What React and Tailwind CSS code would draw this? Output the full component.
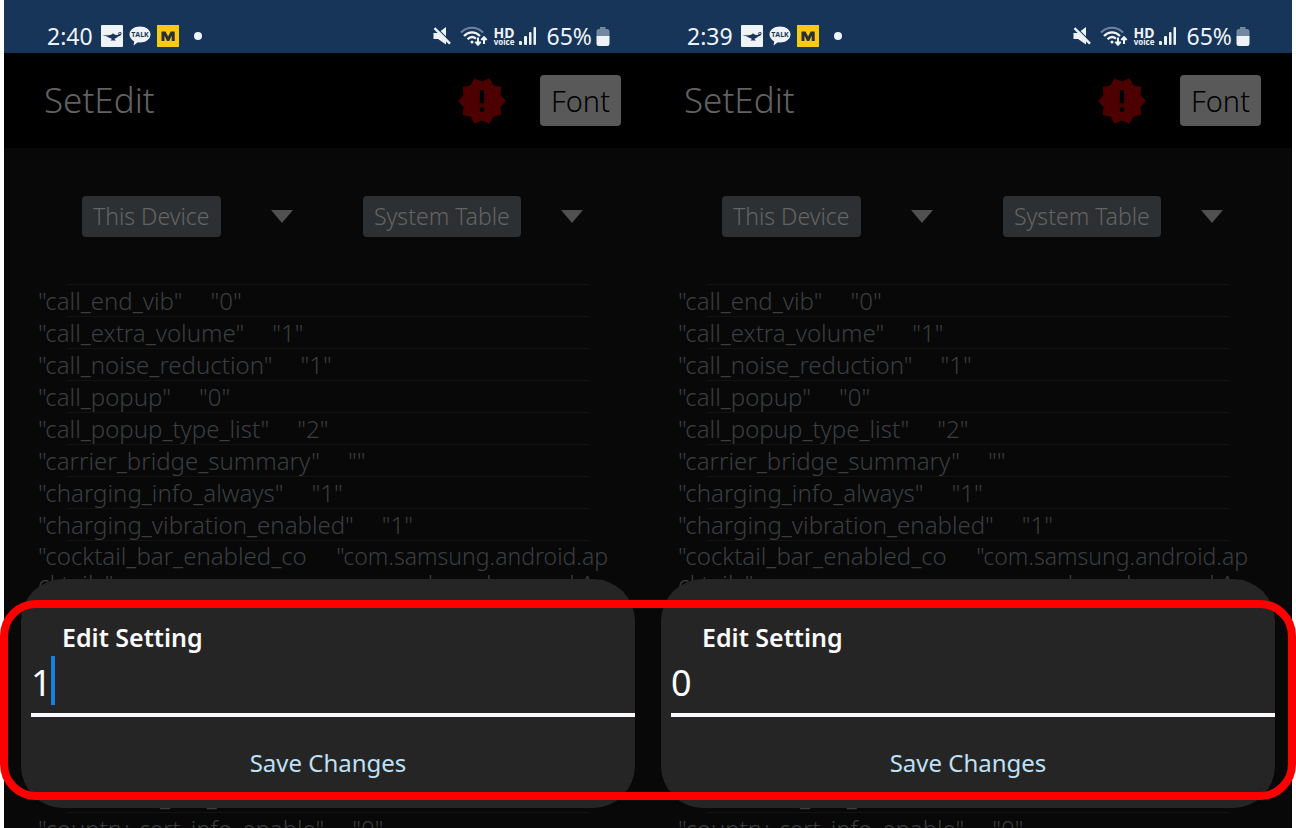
import React, { useState } from "react";
import clsx from "clsx";
import { MdNewReleases } from "react-icons/md";

const settings = [
  { name: "call_end_vib", value: "0" },
  { name: "call_extra_volume", value: "1" },
  { name: "call_noise_reduction", value: "1" },
  { name: "call_popup", value: "0" },
  { name: "call_popup_type_list", value: "2" },
  { name: "carrier_bridge_summary", value: "" },
  { name: "charging_info_always", value: "1" },
  { name: "charging_vibration_enabled", value: "1" },
];

const lastSettings = [
  { name: "connected_bar_mode", value: "0" },
  { name: "country_cert_info_enable", value: "0" },
];

function LampIcon() {
  return (
    <svg viewBox="0 0 22 22" className="size-[22px]" aria-hidden="true">
      <rect width="22" height="22" rx="1" fill="#eef3f8" />
      <path
        d="M1.500 10.300c2.500-.2 4.500.1 6.500 0 1.500-.2 2.600-.7 3.400-1.300l.6-1 .6 1c1 .8 2.400 1.200 4 1.100.5 0 .8-.4.900-1-.6-1.200.2-2.300 1.500-2.200 1.400.1 2 1.200 1.400 2.300-.5 1.300-1.900 1.900-3.400 2.200-1.200 1.300-2.400 2.100-3.800 2.400l1.700 1.700h-5.400l1.500-1.700c-2.600-.5-4.500-2.600-9.500-3.500z"
        fill="#1b3556"
      />
      <circle cx="18.900" cy="8.400" r=".7" fill="#eef3f8" />
    </svg>
  );
}

function TalkIcon() {
  return (
    <svg viewBox="0 0 22 22" className="size-[22px]" aria-hidden="true">
      <path
        d="M11 1.500c5.900 0 10.500 3.500 10.500 8s-4.600 8-10.500 8c-.8 0-1.500 0-2.200-.2L4.600 20.500l.5-4.300C2.300 14.800.5 12.300.5 9.500c0-4.500 4.600-8 10.500-8z"
        fill="#eef3f8"
      />
      <text
        x="11"
        y="12"
        textAnchor="middle"
        fontSize="7"
        fontWeight="700"
        fontFamily="Open Sans, sans-serif"
        fill="#1b3556"
      >
        TALK
      </text>
    </svg>
  );
}

function MuteIcon() {
  return (
    <svg viewBox="0 0 20 20" className="size-5" aria-hidden="true">
      <path d="M1.500 7h4.500L14 1v17.500L6 13H1.500z" fill="#eef3f8" />
      <path d="M4.200 1.500l15 15" stroke="#173459" strokeWidth="1.200" />
      <path d="M2.500 2.200l15.500 15.500" stroke="#eef3f8" strokeWidth="2.400" />
    </svg>
  );
}

function WifiIcon() {
  return (
    <svg viewBox="0 0 28 20" className="h-5 w-7" fill="none" aria-hidden="true">
      <path d="M1 6.500C7.500.2 16.500.2 23 6.500" stroke="#6f849f" strokeWidth="2" />
      <path d="M4 10c4.700-4.800 11.300-4.800 16 0" stroke="#eef3f8" strokeWidth="2.200" />
      <path d="M7.500 13.200c2.800-2.700 6-2.700 8.500-.4" stroke="#eef3f8" strokeWidth="2.200" />
      <circle cx="12" cy="16" r="1.500" fill="#eef3f8" />
      <path
        d="M18 11.500v7M15.300 15.800l2.700 2.900 2.700-2.900M24 18v-6.500M21.300 14l2.700-2.900 2.700 2.900"
        stroke="#eef3f8"
        strokeWidth="2"
      />
    </svg>
  );
}

function SignalIcon() {
  return (
    <svg viewBox="0 0 18 18" className="size-[18px]" fill="#eef3f8" aria-hidden="true">
      <rect x="0" y="14" width="3" height="4" rx="1" />
      <rect x="5" y="9" width="3" height="9" rx="1" />
      <rect x="10" y="5" width="2.500" height="13" rx="1" />
      <rect x="14.500" y="0" width="2.500" height="18" rx="1" />
    </svg>
  );
}

function BatteryIcon() {
  return (
    <svg viewBox="0 0 14 19" className="h-[19px] w-3.5" aria-hidden="true">
      <path d="M4 0h5.500v2H11a2.500 2.500 0 0 1 2.500 2.500V9H.5V4.500A2.500 2.500 0 0 1 3 2h1z" fill="#74889f" />
      <path d="M.5 9h13v7.500A2.500 2.500 0 0 1 11 19H3a2.500 2.500 0 0 1-2.500-2.500z" fill="#eef3f8" />
    </svg>
  );
}

function StatusBar({ time }) {
  return (
    <div className="flex h-[53px] items-end justify-between bg-[#173459] pr-[34px] pb-px pl-[43px] text-[23px] leading-8 text-[#eef3f8]">
      <div className="flex items-center">
        <span>{time}</span>
        <div className="ml-2 flex gap-1.5">
          <LampIcon />
          <TalkIcon />
          <svg viewBox="0 0 22 22" className="size-[22px]" aria-hidden="true">
            <rect width="22" height="22" fill="#f8cb12" />
            <path d="M4.500 16V6.500h4l2.600 5 2.600-5h4V16h-3v-5.500L12.200 16H10l-2.500-5.500V16z" fill="#2b2f36" />
          </svg>
        </div>
        <span className="ml-[15px] size-2 rounded-full bg-[#eef3f8]" />
      </div>
      <div className="flex items-center">
        <MuteIcon />
        <span className="ml-2">
          <WifiIcon />
        </span>
        <span className="ml-1.5 flex flex-col text-center text-[14px] leading-[11px] font-bold">
          HD
          <span className="text-[8px] leading-[7px]">voice</span>
        </span>
        <span className="ml-1">
          <SignalIcon />
        </span>
        <span className="mr-1 ml-2.5">65%</span>
        <BatteryIcon />
      </div>
    </div>
  );
}

function Dropdown({ label, option, className }) {
  return (
    <label className={clsx("flex items-center", className)}>
      <select
        aria-label={label}
        className="h-[41px] appearance-none rounded bg-[#2d3032] px-[11px] text-[23px] font-light text-[#646464]"
      >
        <option>{option}</option>
      </select>
      <svg viewBox="0 0 22 13" className="h-[13px] w-[22px]" aria-hidden="true">
        <path d="M0 0h22L11 13z" fill="#505050" />
      </svg>
    </label>
  );
}

function SettingRow({ name, value }) {
  return (
    <li>
      <div className="mr-5 ml-[30px] h-px bg-[#121212]" />
      <div className="flex h-[31px] items-center gap-7 whitespace-nowrap">
        <span>"{name}"</span>
        <span>"{value}"</span>
      </div>
    </li>
  );
}

function EditDialog({ id, initial, focused }) {
  const [value, setValue] = useState(initial);

  return (
    <form
      onSubmit={(e) => e.preventDefault()}
      className="absolute inset-x-0 bottom-5 mr-[9px] ml-[17px] flex h-[229px] flex-col rounded-[42px] bg-[#252525] pt-[38px]"
    >
      <label htmlFor={id} className="ml-[41px] text-[25px] leading-10 font-semibold text-[#fcfcfc]">
        Edit Setting
      </label>
      <div className="relative ml-2.5">
        <input
          id={id}
          type="text"
          value={value}
          onChange={(e) => setValue(e.target.value)}
          className="block h-[60px] w-full border-b-4 border-[#fdf8fb] pb-1.5 text-[36px] text-[#fcfcfc] outline-none"
        />
        {focused && <span className="absolute -top-px left-5 h-[49px] w-1 bg-[#1a7de0]" />}
      </div>
      <button type="submit" className="mx-auto mt-[26px] text-[24px] leading-10 text-[#bfe0f5]">
        Save Changes
      </button>
    </form>
  );
}

function Phone({ id, time, value, focused, className }) {
  return (
    <div className={clsx("min-w-0 bg-[linear-gradient(#173459_53px,#000_53px,#000_148px,#080808_148px)]", className)}>
      <div className="relative h-full overflow-hidden">
        <StatusBar time={time} />
        <header className="flex h-[95px] items-center pr-[23px] pl-10">
          <h1 className="mr-auto text-[35px] font-light text-[#626262]">SetEdit</h1>
          <MdNewReleases className="mr-8 size-[52px] text-[#4c0000]" />
          <button className="h-[51px] rounded bg-[#595959] px-[11px] text-[29px] font-light text-black">Font</button>
        </header>
        <div className="flex h-[136px] items-center justify-between pr-[61px] pl-[78px]">
          <Dropdown label="Device" option="This Device" className="gap-[50px]" />
          <Dropdown label="Table" option="System Table" className="gap-10" />
        </div>
        <ul className="pr-9 pl-[34px] text-[24px] font-light text-[#3b3e40]">
          {settings.map((s) => (
            <SettingRow key={s.name} name={s.name} value={s.value} />
          ))}
          <li className="h-[240px]">
            <div className="mr-5 ml-[30px] h-px bg-[#121212]" />
            <div className="flex justify-between pt-px leading-7 whitespace-nowrap">
              <span>
                "cocktail_bar_enabled_co
                <br />
                cktails"
              </span>
              <span className="text-right text-[23px]">
                "com.samsung.android.ap
                <br />
                ps.edge.edge.used.Ap
              </span>
            </div>
          </li>
          {lastSettings.map((s) => (
            <SettingRow key={s.name} name={s.name} value={s.value} />
          ))}
        </ul>
        <EditDialog id={id} initial={value} focused={focused} />
      </div>
    </div>
  );
}

function App() {
  return (
    <main className="relative h-screen overflow-hidden bg-white px-1 font-['Noto_Sans',sans-serif]">
      <div className="grid h-full grid-cols-[640fr_648fr] grid-rows-[minmax(0,1fr)]">
        <Phone id="setting-before" time="2:40" value="1" focused />
        <Phone id="setting-after" time="2:39" value="0" className="pr-2" />
      </div>
      <div className="pointer-events-none absolute inset-x-0 bottom-7 h-[200px] rounded-[36px] border-8 border-[#ff0000]" />
    </main>
  );
}

export default App;
